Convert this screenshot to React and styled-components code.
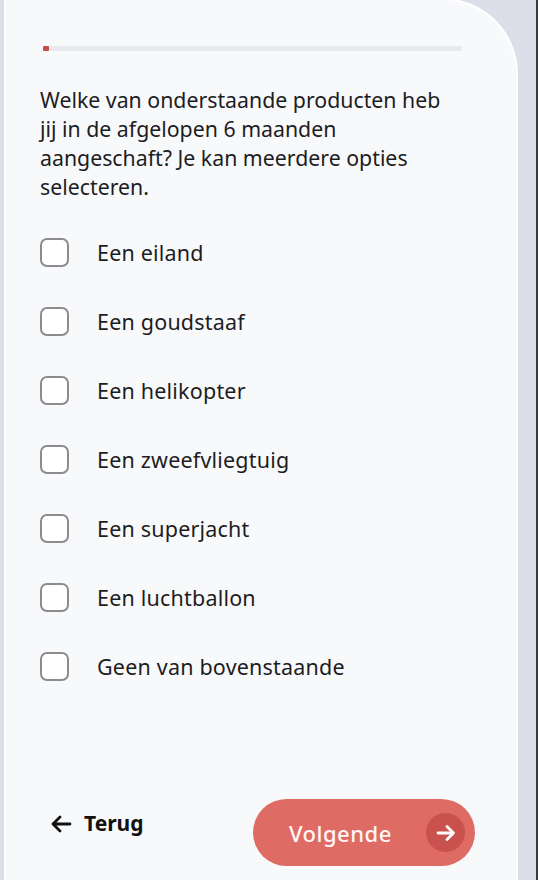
import React from "react";
import styled, { createGlobalStyle } from "styled-components";

const Global = createGlobalStyle`
  html, body { margin: 0; padding: 0; background: #dcdeea; }
  body { font-family: "Noto Sans", "Open Sans", sans-serif; }
  * { box-sizing: border-box; }
`;

const Screen = styled.div`
  width: 538px;
  height: 880px;
  display: flex;
  background: #dcdeea;
  overflow: hidden;
`;

const Card = styled.div`
  width: 510px;
  margin-left: 6px;
  height: 880px;
  background: #f8f9fb;
  border-top-right-radius: 74px;
  box-shadow: 0 0 0 2px #ffffff;
  padding: 46px 54px 0 34px;
  display: flex;
  flex-direction: column;
`;

const EdgeLine = styled.div`
  width: 2px;
  margin-left: auto;
  background: #3a3a3c;
`;

const Progress = styled.div`
  height: 5px;
  margin-left: 3px;
  background: #e8e9ec;
  border-radius: 2px;
  display: flex;
`;

const ProgressFill = styled.div`
  height: 100%;
  background: #c4504e;
  border-radius: 1px;
`;

const Question = styled.p`
  margin: 34px 0 0;
  font-size: 21.3px;
  line-height: 29px;
  color: #1d1d1f;
`;

const Options = styled.div`
  margin-top: 37px;
  display: flex;
  flex-direction: column;
  gap: 40px;
`;

const Option = styled.label`
  display: flex;
  align-items: center;
  gap: 28px;
  height: 29px;
  font-size: 21.5px;
  letter-spacing: 0.2px;
  color: #1d1d1f;
`;

const Box = styled.span`
  width: 29px;
  height: 29px;
  border: 2px solid #8c8c8e;
  border-radius: 7px;
  background: #ffffff;
  flex-shrink: 0;
`;

const Footer = styled.div`
  margin-top: 118px;
  margin-right: -13px;
  padding-left: 10px;
  display: flex;
  justify-content: space-between;
  align-items: flex-start;
`;

const BackButton = styled.button`
  margin-top: 10px;
  border: none;
  background: none;
  padding: 0;
  display: flex;
  align-items: center;
  gap: 12px;
  font-family: inherit;
  font-size: 21px;
  font-weight: 700;
  line-height: 29px;
  color: #111;
`;

const NextButton = styled.button`
  width: 222px;
  height: 67px;
  border: none;
  border-radius: 34px;
  background: #df6b65;
  padding: 0 10px 0 36px;
  display: flex;
  align-items: center;
  justify-content: space-between;
  font-family: inherit;
  font-size: 22px;
  font-weight: 500;
  letter-spacing: 0.5px;
  color: #fff6f5;
`;

const ArrowCircle = styled.span`
  width: 39px;
  height: 39px;
  border-radius: 50%;
  background: #c9524e;
  display: flex;
  align-items: center;
  justify-content: center;
`;

const options = [
  "Een eiland",
  "Een goudstaaf",
  "Een helikopter",
  "Een zweefvliegtuig",
  "Een superjacht",
  "Een luchtballon",
  "Geen van bovenstaande",
];

export default function App() {
  return (
    <Screen>
      <Global />
      <Card>
        <Progress>
          <ProgressFill style={{ width: "6px" }} />
        </Progress>
        <Question>
          Welke van onderstaande producten heb jij in de afgelopen 6 maanden
          aangeschaft? Je kan meerdere opties selecteren.
        </Question>
        <Options>
          {options.map((o) => (
            <Option key={o}>
              <Box />
              {o}
            </Option>
          ))}
        </Options>
        <Footer>
          <BackButton>
            <svg width="22" height="18" viewBox="0 0 22 18" fill="none">
              <path d="M20 9H3M10 2L3 9l7 7" stroke="#111" strokeWidth="2.8" strokeLinecap="round" strokeLinejoin="round" />
            </svg>
            Terug
          </BackButton>
          <NextButton>
            Volgende
            <ArrowCircle>
              <svg width="20" height="18" viewBox="0 0 20 18" fill="none">
                <path d="M2 9h15M11 2.5L17.5 9 11 15.5" stroke="#fff" strokeWidth="2.8" strokeLinecap="round" strokeLinejoin="round" />
              </svg>
            </ArrowCircle>
          </NextButton>
        </Footer>
      </Card>
      <EdgeLine />
    </Screen>
  );
}
